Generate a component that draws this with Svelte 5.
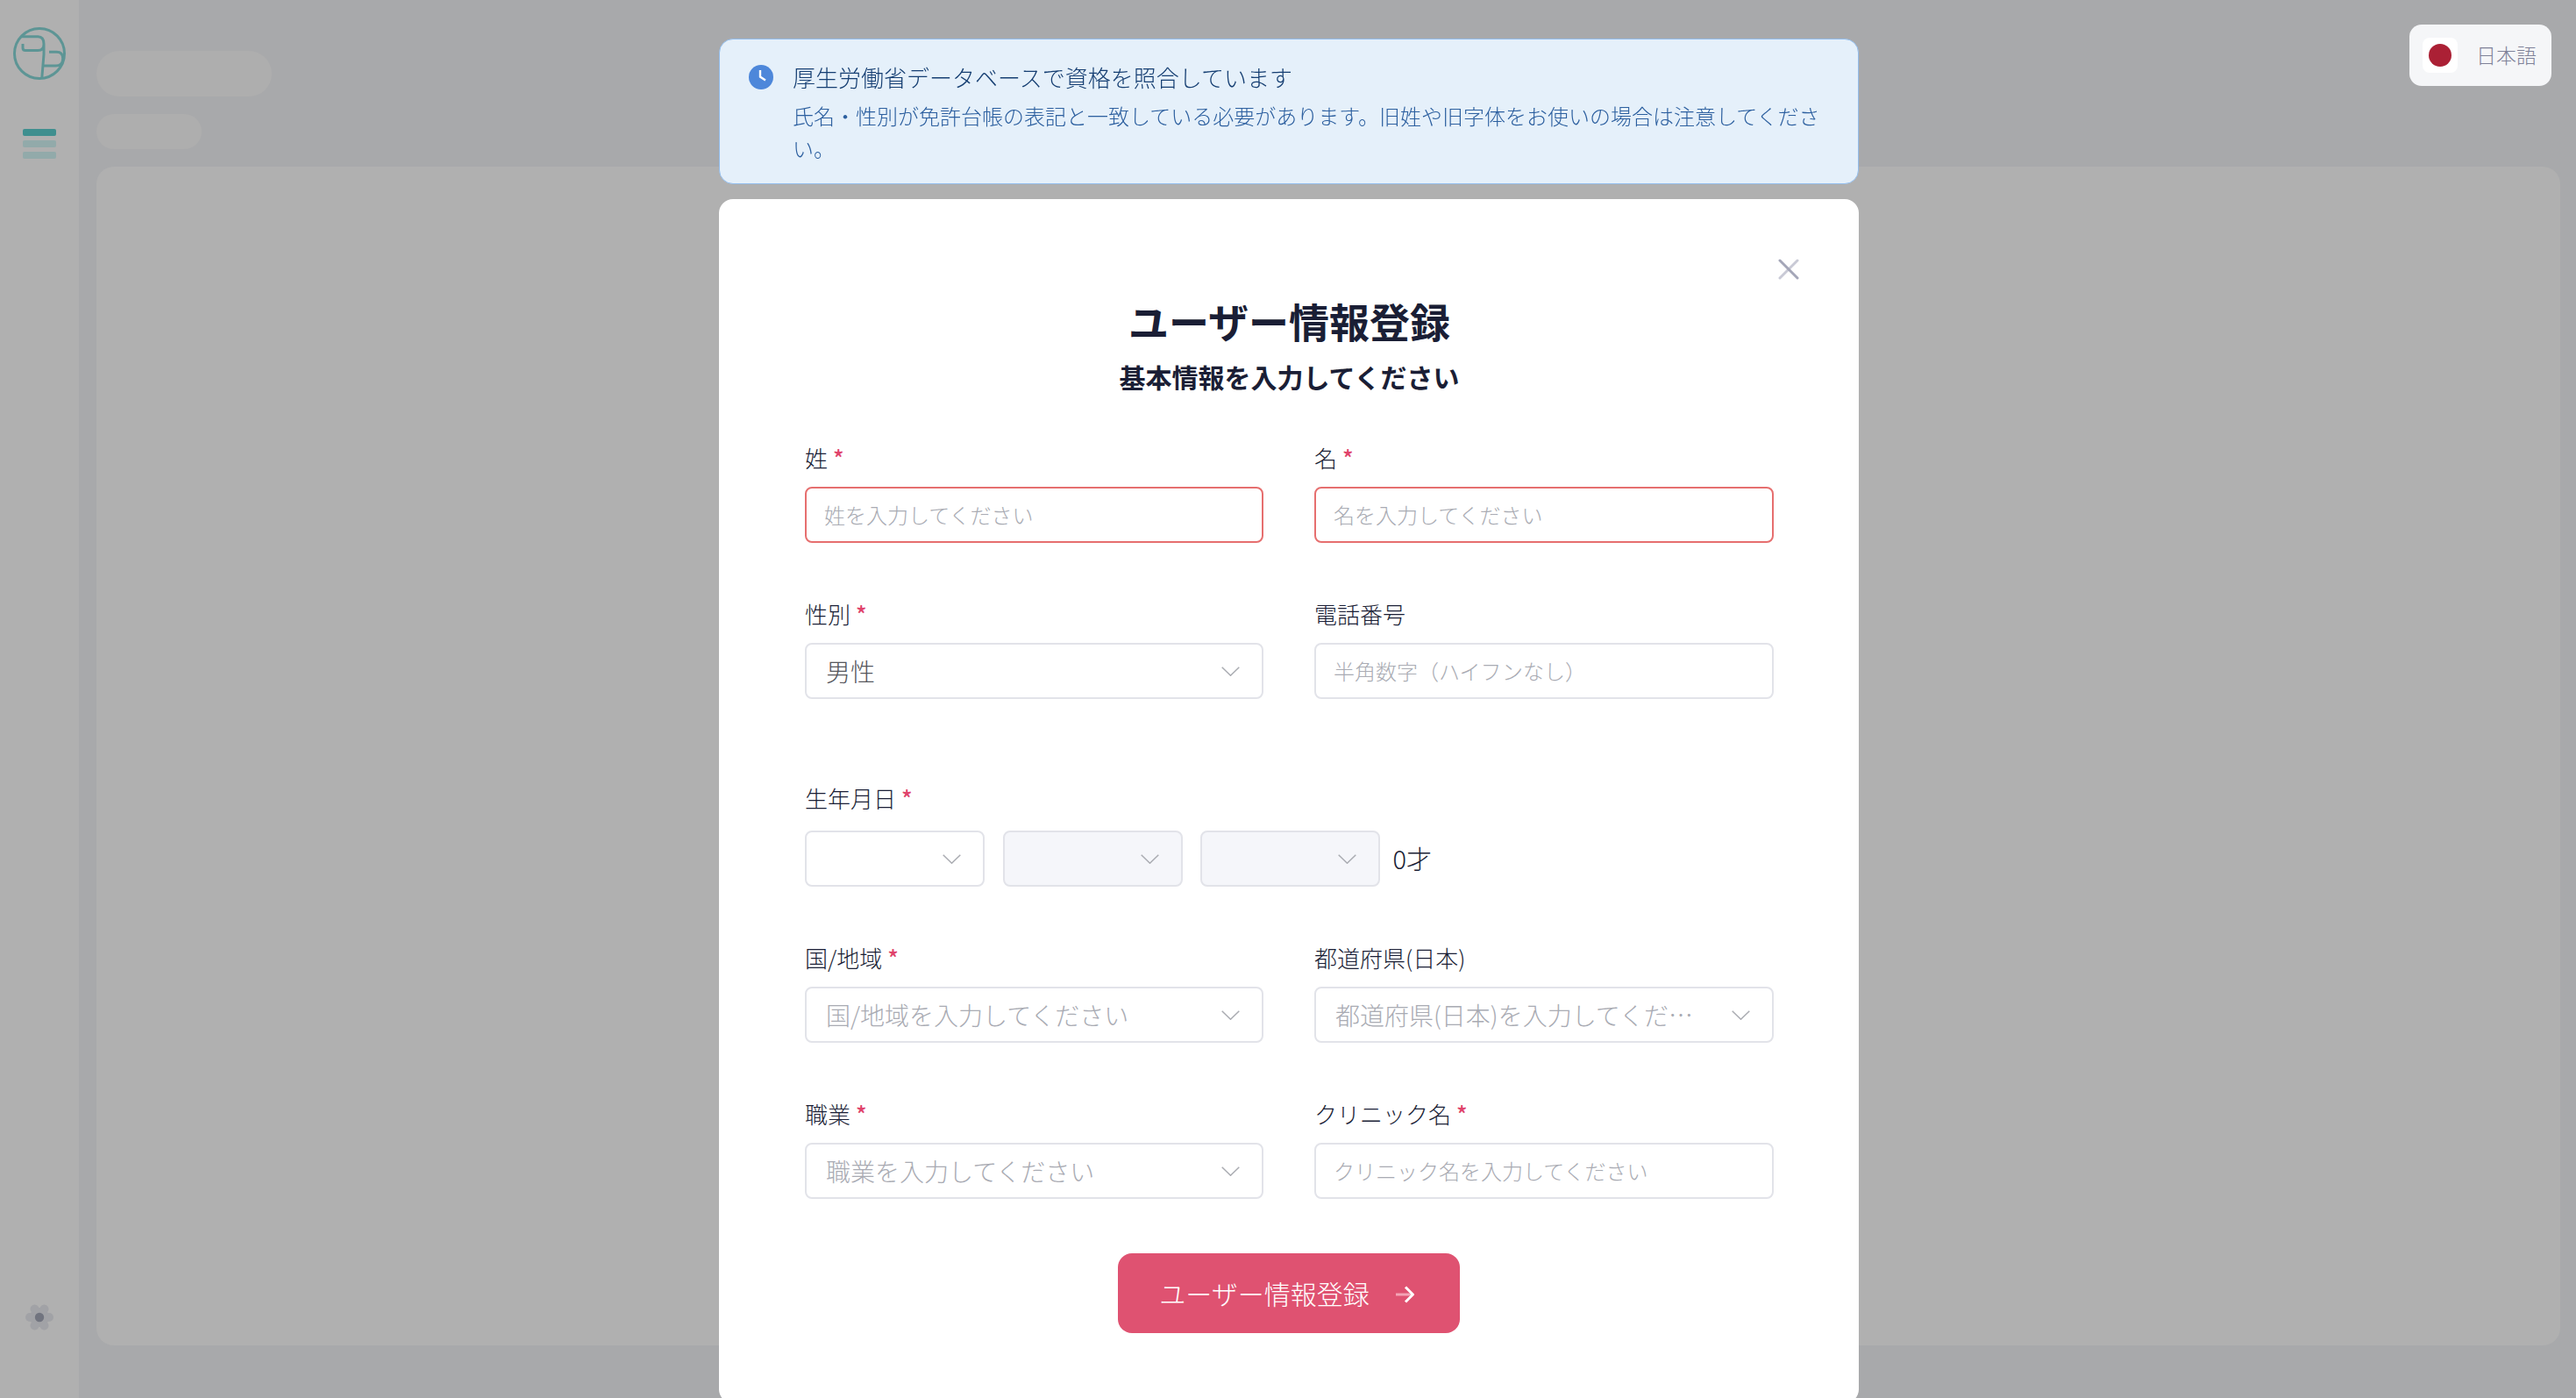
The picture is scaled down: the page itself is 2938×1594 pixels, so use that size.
<script lang="ts">
	const gearLobes = [0, 60, 120, 180, 240, 300];
</script>

{#snippet chevron()}
	<svg class="chevron" viewBox="0 0 21 11" width="21" height="11" aria-hidden="true">
		<path d="M0.7 0.7 10.5 10.2 20.3 0.7" />
	</svg>
{/snippet}

{#snippet fieldLabel(text: string, required: boolean)}
	<div class="label">{text}{#if required}<span class="req">*</span>{/if}</div>
{/snippet}

<div class="page">
	<aside class="sidebar">
		<svg class="logo" viewBox="0 0 60 60" width="60" height="60" aria-hidden="true">
			<circle cx="30" cy="30" r="28.5" />
			<path d="M11 19v4.5q0 3 3 3h14.3q6.7 0 6.7-7.3 0-8.5-6.7-8.5H10M35 19v12L32.7 59" />
			<path d="M41 28.3h8.5q7.2 0 7.2 7.4 0 8.3-8.4 8.3H33.3" />
		</svg>
		<div class="menu">
			<span class="active"></span>
			<span></span>
			<span></span>
		</div>
		<svg class="gear" viewBox="0 0 32 32" width="32" height="32" aria-hidden="true">
			<circle cx="16" cy="16" r="11" fill="#a1a2a6" />
			{#each gearLobes as deg}
				<circle cx="16" cy="16" r="5" fill="#a1a2a6" transform={`rotate(${deg} 16 16) translate(11 0)`} />
			{/each}
			<circle cx="16" cy="16" r="5.2" fill="#71747f" />
		</svg>
	</aside>
	<main class="content">
		<div class="skeleton wide"></div>
		<div class="skeleton short"></div>
		<div class="panel"></div>
	</main>
</div>

<div class="overlay">
	<div class="notice">
		<svg class="clock" viewBox="0 0 28 28" width="28" height="28" aria-hidden="true">
			<circle cx="14" cy="14" r="14" fill="#4d87da" />
			<path d="M13 6v7.6l6 3.8" fill="none" stroke="#fff" stroke-width="2.4" />
		</svg>
		<div class="notice-text">
			<p class="notice-title">厚生労働省データベースで資格を照合しています</p>
			<p class="notice-body">氏名・性別が免許台帳の表記と一致している必要があります。旧姓や旧字体をお使いの場合は注意してください。</p>
		</div>
	</div>

	<section class="modal">
		<button class="close" aria-label="閉じる">
			<svg viewBox="0 0 24 24" width="24" height="24" aria-hidden="true">
				<path d="M2 22 22 2" stroke="#c9cad6" />
				<path d="M2 2 22 22" stroke="#a4a6b8" />
			</svg>
		</button>

		<h1>ユーザー情報登録</h1>
		<h2>基本情報を入力してください</h2>

		<form class="form">
			<div class="field">
				{@render fieldLabel('姓', true)}
				<input class="input error" placeholder="姓を入力してください" />
			</div>
			<div class="field">
				{@render fieldLabel('名', true)}
				<input class="input error" placeholder="名を入力してください" />
			</div>

			<div class="field">
				{@render fieldLabel('性別', true)}
				<div class="select"><span class="value">男性</span>{@render chevron()}</div>
			</div>
			<div class="field">
				{@render fieldLabel('電話番号', false)}
				<input class="input" placeholder="半角数字（ハイフンなし）" />
			</div>

			<div class="field span birth">
				{@render fieldLabel('生年月日', true)}
				<div class="birth-row">
					<div class="select">{@render chevron()}</div>
					<div class="select disabled">{@render chevron()}</div>
					<div class="select disabled">{@render chevron()}</div>
					<span class="age">0才</span>
				</div>
			</div>

			<div class="field">
				{@render fieldLabel('国/地域', true)}
				<div class="select"><span class="value empty">国/地域を入力してください</span>{@render chevron()}</div>
			</div>
			<div class="field">
				{@render fieldLabel('都道府県(日本)', false)}
				<div class="select"><span class="value empty">都道府県(日本)を入力してくだ…</span>{@render chevron()}</div>
			</div>

			<div class="field">
				{@render fieldLabel('職業', true)}
				<div class="select"><span class="value empty">職業を入力してください</span>{@render chevron()}</div>
			</div>
			<div class="field">
				{@render fieldLabel('クリニック名', true)}
				<input class="input" placeholder="クリニック名を入力してください" />
			</div>
		</form>

		<button class="submit">
			ユーザー情報登録
			<svg viewBox="0 0 21 20" width="21" height="20" aria-hidden="true">
				<path d="M0 10H18" stroke="#f3a3b5" />
				<path d="M11 1.5 19.5 10 11 18.5" stroke="#fff" />
			</svg>
		</button>
	</section>
</div>

<button class="lang">
	<span class="flag"><span></span></span>
	日本語
</button>

<style>
	:global(body) {
		background: #a8a9ab;
		font-family: 'Noto Sans CJK JP', sans-serif;
		font-weight: 300;
		overflow: hidden;
	}

	p,
	h1,
	h2 {
		margin: 0;
	}

	.page {
		display: flex;
		height: 100vh;
	}

	.sidebar {
		width: 90px;
		flex-shrink: 0;
		background: #b0b0b0;
		display: flex;
		flex-direction: column;
		align-items: center;
		padding: 31px 0 76px;
		box-sizing: border-box;
	}

	.logo {
		fill: none;
		stroke: #5d9595;
		stroke-width: 3;
	}

	.menu {
		margin-top: 56px;
		display: flex;
		flex-direction: column;
		gap: 5px;
	}

	.menu span {
		display: block;
		width: 38px;
		height: 8px;
		border-radius: 2px;
		background: #92aaaa;
	}

	.menu .active {
		background: #3f8f8f;
	}

	.gear {
		margin-top: auto;
	}

	.content {
		flex: 1;
		padding: 58px 18px 60px 20px;
		display: flex;
		flex-direction: column;
		align-items: flex-start;
		gap: 20px;
		min-width: 0;
	}

	.skeleton {
		background: #aeaeae;
		border-radius: 26px;
	}

	.wide {
		width: 200px;
		height: 52px;
	}

	.short {
		width: 120px;
		height: 40px;
	}

	.panel {
		flex: 1;
		align-self: stretch;
		background: #b0b0b0;
		border-radius: 20px;
	}

	.overlay {
		position: fixed;
		inset: 0;
		overflow: hidden;
		display: flex;
		flex-direction: column;
		align-items: center;
		padding: 44px 0 0 2px;
		gap: 17px;
	}

	.notice {
		width: 1300px;
		height: 166px;
		flex-shrink: 0;
		box-sizing: border-box;
		background: #e5f0fa;
		border: 1.5px solid #93bdec;
		border-radius: 16px;
		padding: 25px 28px 0 33px;
		display: flex;
		gap: 22px;
	}

	.clock {
		flex-shrink: 0;
		margin-top: 4px;
	}

	.notice-title {
		font-size: 26px;
		line-height: 36px;
		color: #153e72;
	}

	.notice-body {
		font-size: 24px;
		line-height: 37px;
		margin-top: 7px;
		color: #2c5f9f;
	}

	.modal {
		position: relative;
		width: 1300px;
		flex-shrink: 0;
		box-sizing: border-box;
		background: #fff;
		border-radius: 16px;
		padding: 108px 97px 80px 98px;
		display: flex;
		flex-direction: column;
	}

	.close {
		position: absolute;
		top: 68px;
		right: 68px;
		padding: 0;
		border: 0;
		background: none;
		line-height: 0;
	}

	.close path {
		stroke-width: 3;
		stroke-linecap: round;
		fill: none;
	}

	h1 {
		font-size: 46px;
		line-height: 60px;
		font-weight: 700;
		text-align: center;
		color: #1a1e35;
	}

	h2 {
		font-size: 30px;
		line-height: 40px;
		font-weight: 700;
		text-align: center;
		color: #1a1e35;
		margin-top: 14px;
	}

	.form {
		display: grid;
		grid-template-columns: 523px 524px;
		justify-content: space-between;
		row-gap: 63px;
		margin-top: 55px;
	}

	.span {
		grid-column: 1 / -1;
	}

	.birth {
		margin-top: 32px;
	}

	.birth .label {
		margin-bottom: 19px;
	}

	.label {
		font-size: 26px;
		line-height: 36px;
		color: #1a1e35;
		margin-bottom: 15px;
	}

	.req {
		color: #e0436b;
		font-size: 26px;
		font-weight: 500;
		line-height: 1;
		margin-left: 6px;
	}

	.input,
	.select {
		display: flex;
		align-items: center;
		width: 100%;
		height: 64px;
		box-sizing: border-box;
		border: 2px solid #e2e3e9;
		border-radius: 8px;
		background: #fff;
	}

	.input {
		padding: 0 20px 2px;
		font: inherit;
		font-size: 24px;
		color: #2a2d45;
		outline: none;
	}

	.input::placeholder {
		color: #a9abb3;
		opacity: 1;
	}

	.input.error {
		border-color: #e66f6f;
	}

	.select {
		padding: 0 25px 0 22px;
		justify-content: space-between;
		gap: 24px;
	}

	.select.disabled {
		background: #f5f6fa;
	}

	.value {
		font-size: 28px;
		line-height: 40px;
		color: #55565c;
		white-space: nowrap;
		overflow: hidden;
		text-overflow: ellipsis;
		min-width: 0;
	}

	.value.empty {
		color: #a9abb3;
	}

	.chevron {
		flex-shrink: 0;
		margin-left: auto;
		fill: none;
		stroke: #a9abb1;
		stroke-width: 1.5;
	}

	.birth-row {
		display: flex;
		align-items: center;
		gap: 20.5px;
	}

	.birth-row .select {
		width: 205px;
	}

	.age {
		font-size: 29px;
		line-height: 40px;
		color: #1a1e35;
		margin: 0 0 2px -6px;
	}

	.submit {
		align-self: center;
		margin: 62px 1px 0 0;
		width: 390px;
		height: 91px;
		border: 0;
		border-radius: 16px;
		background: #df5271;
		color: #fff;
		font: inherit;
		font-size: 30px;
		display: flex;
		align-items: center;
		justify-content: center;
		gap: 30px;
		padding: 0 5px 2px 0;
	}

	.submit svg {
		fill: none;
		stroke-width: 3;
		margin-top: 4px;
	}

	.lang {
		position: fixed;
		top: 28px;
		right: 28px;
		width: 162px;
		height: 70px;
		box-sizing: border-box;
		padding: 0 15px 2px;
		border: 0;
		border-radius: 14px;
		background: #f5f6f8;
		color: #7e8198;
		font: inherit;
		font-size: 23px;
		display: flex;
		align-items: center;
		gap: 21px;
	}

	.flag {
		width: 40px;
		height: 40px;
		margin-top: 2px;
		border-radius: 8px;
		background: #fff;
		display: flex;
		align-items: center;
		justify-content: center;
	}

	.flag span {
		width: 26px;
		height: 26px;
		border-radius: 50%;
		background: #ab2035;
	}
</style>
